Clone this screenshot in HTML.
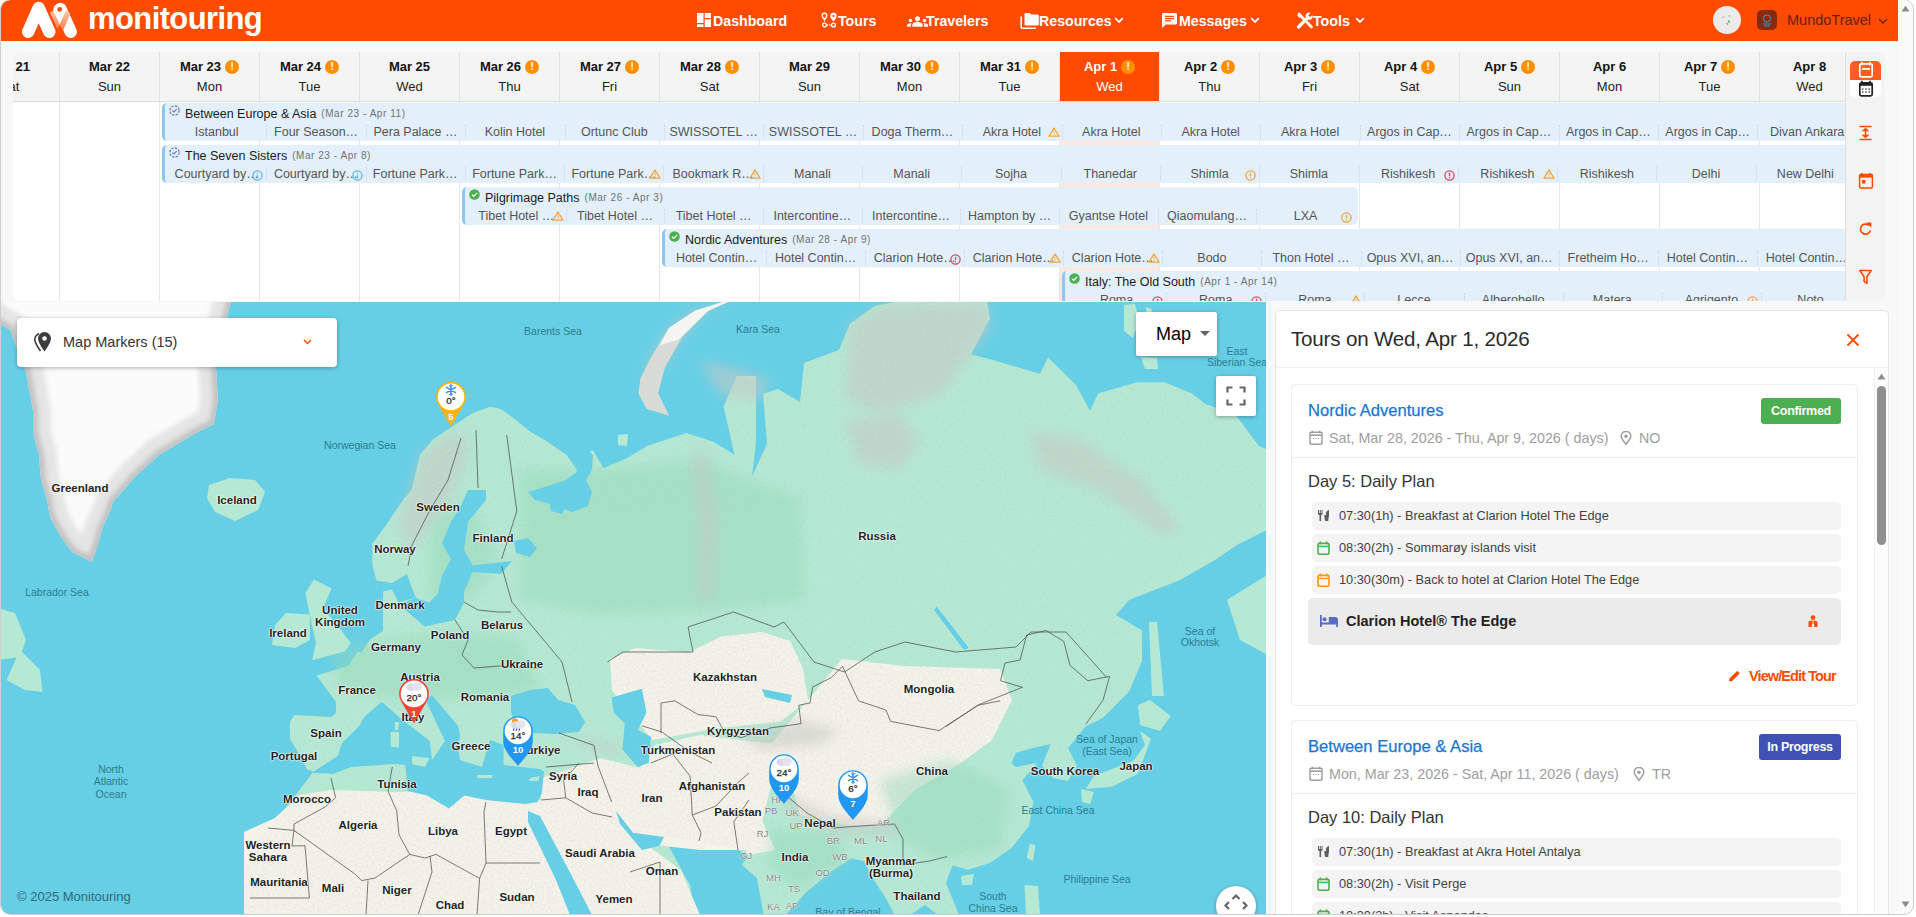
<!DOCTYPE html><html><head><meta charset="utf-8"><style>
*{box-sizing:border-box;margin:0;padding:0}
html,body{width:1916px;height:917px;overflow:hidden;background:#fff;font-family:"Liberation Sans",sans-serif}
.abs{position:absolute}
#frame{position:absolute;left:0;top:0;width:1914px;height:915px;background:#f8f8f8;border-radius:10px;overflow:hidden}
#bd{position:absolute;left:0;top:-1px;width:1914px;height:916px;border:1px solid #cfcfcf;border-radius:10px;pointer-events:none}
#hdr{position:absolute;left:1px;top:0;width:1897px;height:41px;background:#ff4b00;border-radius:9px 0 0 0}
.nav{position:absolute;top:1px;height:41px;line-height:41px;color:#fff;font-weight:bold;font-size:14.2px;white-space:nowrap}
.nav svg{position:absolute}
#cal{position:absolute;left:13px;top:52px;width:1832px;height:249px;overflow:hidden;border-radius:6px 6px 0 6px}
#calhead{position:absolute;left:0;top:0;width:1832px;height:50px;background:#f4f4f4;border-bottom:1px solid #dcdcdc}
.dh{position:absolute;top:0;width:100px;height:49px;border-right:1px solid #e2e2e2;text-align:center}
.dh .d{position:absolute;left:0;width:100%;top:7px;font-weight:bold;font-size:13px;color:#111;white-space:nowrap}
.dh .n{position:absolute;left:0;width:100%;top:27px;font-size:13px;color:#222}
.warn{display:inline-block;width:14px;height:14px;border-radius:50%;background:#ff8f00;color:#fff;font-size:10px;line-height:14px;text-align:center;font-weight:bold;vertical-align:top;margin-left:4px;margin-top:0px}
#calbody{position:absolute;left:0;top:50px;width:1832px;height:199px;background:#fff}
.col{position:absolute;top:0;height:199px;border-right:1px solid #e8e8e8}
.bar{position:absolute;height:38px;background:#e3f0fc;border-left:3px solid #8ec5f7;border-radius:5px;overflow:hidden}
.bt{position:absolute;left:20px;top:4px;font-size:12.5px;color:#1b1b1b;white-space:nowrap}
.bt small{font-size:10px;color:#707070;letter-spacing:0.55px;margin-left:5px;vertical-align:1px}
.bi{position:absolute;left:4px;top:2px;line-height:0}
.seg{position:absolute;top:22px;height:15px;font-size:12.5px;color:#545454;text-align:center;white-space:nowrap;overflow:hidden}
.sep{position:absolute;top:22px;height:14px;border-left:1px dotted #c9d6e3}
.lbl{position:absolute;width:120px;text-align:center;font-size:11.5px;font-weight:bold;color:#222;white-space:nowrap;text-shadow:0 0 2px #fff,0 0 2px #fff,0 0 1px #fff}
.stl{position:absolute;width:60px;text-align:center;font-size:9.5px;color:#808080;white-space:nowrap;text-shadow:0 0 2px #fff,0 0 1px #fff}
.slbl{position:absolute;width:120px;text-align:center;font-size:10.5px;color:#2a7d8f;white-space:nowrap}
#tb{position:absolute;left:1845px;top:52px;width:40px;height:249px;background:#f3f3f3;border-radius:0 6px 5px 0}
</style></head><body><div id="frame">
<div id="hdr">
<svg class="abs" style="left:15px;top:0px" width="70" height="40" viewBox="15 0 70 40">
<defs><linearGradient id="lg1" x1="0" y1="0" x2="0" y2="1"><stop offset="0" stop-color="#ffc2a6"/><stop offset="1" stop-color="#ff7f4a"/></linearGradient></defs>
<path d="M27.2 31.8L37.7 8L48.3 31.8" fill="none" stroke="#fff" stroke-width="12.4" stroke-linecap="round" stroke-linejoin="round"/>
<path d="M59.5 9L69.7 31.8" fill="none" stroke="#fff" stroke-width="12.4" stroke-linecap="round"/>
<path d="M48.8 12.2L53 10.6L58.8 24.6L56.6 29.2Z" fill="url(#lg1)"/>
<path d="M64.3 10.6L69.4 13.6L62.1 30.4L58.4 24.6Z" fill="url(#lg1)"/>
<path d="M58.6 24.3L52.9 12.2A6.25 6.25 0 1 1 64.3 12.2Z" fill="#fff"/>
<circle cx="58.7" cy="9.4" r="2.4" fill="#ff4b00"/>
</svg>
<div class="abs" style="left:87px;top:1px;font-size:31px;font-weight:bold;color:#fff;letter-spacing:-0.6px">monitouring</div>
<svg class="abs" style="left:695px;top:12px" width="16" height="16" viewBox="0 0 16 16"><path d="M1 1h6.5v10H1zM1 12.2h6.5V15H1zM8.7 1H15v5H8.7zM8.7 7.2H15V15H8.7z" fill="#fff"/></svg>
<div class="nav" style="left:712px">Dashboard</div>
<svg class="abs" style="left:820px;top:12px" width="17" height="16" viewBox="0 0 17 16"><path d="M3.5 1.2a2.3 2.3 0 0 1 2.3 2.3c0 1.6-2.3 4-2.3 4S1.2 5.1 1.2 3.5A2.3 2.3 0 0 1 3.5 1.2Z" fill="none" stroke="#fff" stroke-width="1.4"/><path d="M12.5 0.8a3.2 3.2 0 0 1 3.2 3.2c0 2.2-3.2 5.6-3.2 5.6S9.3 6.2 9.3 4a3.2 3.2 0 0 1 3.2-3.2Z" fill="#fff"/><circle cx="12.5" cy="4" r="1.1" fill="#ff4b00"/><circle cx="3.5" cy="13" r="1.9" fill="none" stroke="#fff" stroke-width="1.4"/><circle cx="12.5" cy="13" r="1.9" fill="none" stroke="#fff" stroke-width="1.4"/><path d="M3.5 8.5v2.3M5.8 13h4.5" stroke="#fff" stroke-width="1.3" stroke-dasharray="1.3 1"/></svg>
<div class="nav" style="left:837px">Tours</div>
<svg class="abs" style="left:906px;top:13px" width="21" height="15" viewBox="0 0 24 16"><path d="M12 9.75c1.63 0 3.07.39 4.24.9 1.08.48 1.76 1.56 1.76 2.73V15H6v-1.61c0-1.18.68-2.26 1.76-2.73 1.17-.52 2.61-.91 4.24-.91zM4 10c1.1 0 2-.9 2-2s-.9-2-2-2-2 .9-2 2 .9 2 2 2zm1.13 1.1c-.37-.06-.74-.1-1.13-.1-.99 0-1.930.21-2.78.58C.48 11.9 0 12.62 0 13.43V15h4.5v-1.61c0-.83.23-1.61.63-2.29zM20 10c1.1 0 2-.9 2-2s-.9-2-2-2-2 .9-2 2 .9 2 2 2zm4 3.43c0-.81-.48-1.53-1.22-1.85-.85-.37-1.79-.58-2.78-.58-.39 0-.76.04-1.13.1.4.68.63 1.46.63 2.29V15H24v-1.57zM12 3c1.66 0 3 1.34 3 3s-1.34 3-3 3-3-1.34-3-3 1.34-3 3-3z" fill="#fff"/></svg>
<div class="nav" style="left:925px">Travelers</div>
<svg class="abs" style="left:1019px;top:12px" width="20" height="17" viewBox="0 0 20 17"><path d="M1.2 4.5v10.5c0 .6.5 1.2 1.2 1.2h13.5" fill="none" stroke="#fff" stroke-width="1.6"/><path d="M4.5 2.2c0-.7.5-1.2 1.2-1.2h4l1.6 1.5h6.3c.7 0 1.2.5 1.2 1.2v8.6c0 .7-.5 1.2-1.2 1.2H5.7c-.7 0-1.2-.5-1.2-1.2Z" fill="#fff"/></svg>
<div class="nav" style="left:1038px">Resources</div>
<svg class="abs" style="left:1160px;top:12px" width="17" height="17" viewBox="0 0 17 17"><path d="M2.2 1h12.6c.7 0 1.2.5 1.2 1.2v9c0 .7-.5 1.2-1.2 1.2H4.8L1 16V2.2C1 1.5 1.5 1 2.2 1Z" fill="#fff"/><path d="M4 4.3h9M4 6.6h9M4 8.9h6" stroke="#ff4b00" stroke-width="1.2"/></svg>
<div class="nav" style="left:1178px">Messages</div>
<svg class="abs" style="left:1295px;top:12px" width="18" height="17" viewBox="0 0 18 17"><path d="M2.5 15L11.5 6" stroke="#fff" stroke-width="3.2" stroke-linecap="round"/><path d="M9.5 4.5a3.5 3.5 0 0 1 5-3.5l-2.2 2.2 1.9 1.9 2.2-2.2a3.5 3.5 0 0 1-3.5 5Z" fill="#fff"/><path d="M3 2L15.5 15" stroke="#fff" stroke-width="2.6" stroke-linecap="round"/><path d="M1.2 3.5L3.5 1.2L6 3.5L3.5 6Z" fill="#fff"/></svg>
<div class="nav" style="left:1312px">Tools</div>
<svg class="abs" style="left:1113px;top:17px" width="10" height="7" viewBox="0 0 10 7"><path d="M1.2 1.2L5 5L8.8 1.2" fill="none" stroke="#fff" stroke-width="1.8"/></svg>
<svg class="abs" style="left:1249px;top:17px" width="10" height="7" viewBox="0 0 10 7"><path d="M1.2 1.2L5 5L8.8 1.2" fill="none" stroke="#fff" stroke-width="1.8"/></svg>
<svg class="abs" style="left:1354px;top:17px" width="10" height="7" viewBox="0 0 10 7"><path d="M1.2 1.2L5 5L8.8 1.2" fill="none" stroke="#fff" stroke-width="1.8"/></svg>
<div class="abs" style="left:1712px;top:6px;width:28px;height:28px;border-radius:50%;background:#ebebeb"></div>
<svg class="abs" style="left:1718px;top:12px" width="16" height="16" viewBox="0 0 16 16"><path d="M3 5h3M9 4h3" stroke="#bbb" stroke-width="1"/><path d="M9 8L10 12L11 9Z" fill="#3aa55a"/><path d="M8 10L9 13L7.5 12Z" fill="#e04040"/></svg>
<div class="abs" style="left:1756px;top:10px;width:20px;height:20px;border-radius:5px;background:#862a0c"></div>
<svg class="abs" style="left:1758px;top:12px" width="16" height="16" viewBox="0 0 16 16"><circle cx="8" cy="6.5" r="3.6" fill="none" stroke="#3a9ad8" stroke-width="1"/><path d="M4 12h8M5 14h6" stroke="#3a9ad8" stroke-width="0.9"/></svg>
<div class="abs" style="left:1786px;top:0;height:41px;line-height:40px;font-size:14.5px;color:#66220a;white-space:nowrap">MundoTravel</div>
<svg class="abs" style="left:1877px;top:18px" width="10" height="6" viewBox="0 0 10 6"><path d="M1 1L5 5L9 1" fill="none" stroke="#66220a" stroke-width="1.4"/></svg>
</div>
<div id="cal">
<div id="calhead">
<div class="dh" style="left:-53px;"><div class="d" style="">Mar 21</div><div class="n" style="">Sat</div></div>
<div class="dh" style="left:47px;"><div class="d" style="">Mar 22</div><div class="n" style="">Sun</div></div>
<div class="dh" style="left:147px;"><div class="d" style="">Mar 23<span class="warn" style="margin-top:1px">!</span></div><div class="n" style="">Mon</div></div>
<div class="dh" style="left:247px;"><div class="d" style="">Mar 24<span class="warn" style="margin-top:1px">!</span></div><div class="n" style="">Tue</div></div>
<div class="dh" style="left:347px;"><div class="d" style="">Mar 25</div><div class="n" style="">Wed</div></div>
<div class="dh" style="left:447px;"><div class="d" style="">Mar 26<span class="warn" style="margin-top:1px">!</span></div><div class="n" style="">Thu</div></div>
<div class="dh" style="left:547px;"><div class="d" style="">Mar 27<span class="warn" style="margin-top:1px">!</span></div><div class="n" style="">Fri</div></div>
<div class="dh" style="left:647px;"><div class="d" style="">Mar 28<span class="warn" style="margin-top:1px">!</span></div><div class="n" style="">Sat</div></div>
<div class="dh" style="left:747px;"><div class="d" style="">Mar 29</div><div class="n" style="">Sun</div></div>
<div class="dh" style="left:847px;"><div class="d" style="">Mar 30<span class="warn" style="margin-top:1px">!</span></div><div class="n" style="">Mon</div></div>
<div class="dh" style="left:947px;"><div class="d" style="">Mar 31<span class="warn" style="margin-top:1px">!</span></div><div class="n" style="">Tue</div></div>
<div class="dh" style="left:1047px;background:#ff4b00;"><div class="d" style="color:#fff;">Apr 1<span class="warn" style="margin-top:1px">!</span></div><div class="n" style="color:#fff;">Wed</div></div>
<div class="dh" style="left:1147px;"><div class="d" style="">Apr 2<span class="warn" style="margin-top:1px">!</span></div><div class="n" style="">Thu</div></div>
<div class="dh" style="left:1247px;"><div class="d" style="">Apr 3<span class="warn" style="margin-top:1px">!</span></div><div class="n" style="">Fri</div></div>
<div class="dh" style="left:1347px;"><div class="d" style="">Apr 4<span class="warn" style="margin-top:1px">!</span></div><div class="n" style="">Sat</div></div>
<div class="dh" style="left:1447px;"><div class="d" style="">Apr 5<span class="warn" style="margin-top:1px">!</span></div><div class="n" style="">Sun</div></div>
<div class="dh" style="left:1547px;"><div class="d" style="">Apr 6</div><div class="n" style="">Mon</div></div>
<div class="dh" style="left:1647px;"><div class="d" style="">Apr 7<span class="warn" style="margin-top:1px">!</span></div><div class="n" style="">Tue</div></div>
<div class="dh" style="left:1747px;"><div class="d" style="">Apr 8</div><div class="n" style="">Wed</div></div>
</div>
<div id="calbody">
<div class="col" style="left:-53px;width:100px;"></div>
<div class="col" style="left:47px;width:100px;"></div>
<div class="col" style="left:147px;width:100px;"></div>
<div class="col" style="left:247px;width:100px;"></div>
<div class="col" style="left:347px;width:100px;"></div>
<div class="col" style="left:447px;width:100px;"></div>
<div class="col" style="left:547px;width:100px;"></div>
<div class="col" style="left:647px;width:100px;"></div>
<div class="col" style="left:747px;width:100px;"></div>
<div class="col" style="left:847px;width:100px;"></div>
<div class="col" style="left:947px;width:100px;"></div>
<div class="col" style="left:1047px;width:100px;background:#fde9e0;"></div>
<div class="col" style="left:1147px;width:100px;"></div>
<div class="col" style="left:1247px;width:100px;"></div>
<div class="col" style="left:1347px;width:100px;"></div>
<div class="col" style="left:1447px;width:100px;"></div>
<div class="col" style="left:1547px;width:100px;"></div>
<div class="col" style="left:1647px;width:100px;"></div>
<div class="col" style="left:1747px;width:100px;"></div>
<div class="bar" style="left:149px;top:1px;width:1996px">
<div class="bi"><svg width="11" height="11" viewBox="0 0 11 11"><circle cx="5.5" cy="5.5" r="4.6" fill="none" stroke="#5c6bc0" stroke-width="1.2" stroke-dasharray="2.2 1.4"/><path d="M3.4 5.6 L5 7 L7.6 4.2" fill="none" stroke="#5c6bc0" stroke-width="1.1"/></svg></div>
<div class="bt">Between Europe &amp; Asia<small>(Mar 23 - Apr 11)</small></div>
<div class="seg" style="left:2.00px;width:99.40px">Istanbul</div>
<div class="sep" style="left:101.40px"></div>
<div class="seg" style="left:101.40px;width:99.40px">Four Season…</div>
<div class="sep" style="left:200.80px"></div>
<div class="seg" style="left:200.80px;width:99.40px">Pera Palace …</div>
<div class="sep" style="left:300.20px"></div>
<div class="seg" style="left:300.20px;width:99.40px">Kolin Hotel</div>
<div class="sep" style="left:399.60px"></div>
<div class="seg" style="left:399.60px;width:99.40px">Ortunc Club</div>
<div class="sep" style="left:499.00px"></div>
<div class="seg" style="left:499.00px;width:99.40px">SWISSOTEL …</div>
<div class="sep" style="left:598.40px"></div>
<div class="seg" style="left:598.40px;width:99.40px">SWISSOTEL …</div>
<div class="sep" style="left:697.80px"></div>
<div class="seg" style="left:697.80px;width:99.40px">Doga Therm…</div>
<div class="sep" style="left:797.20px"></div>
<div class="seg" style="left:797.20px;width:99.40px">Akra Hotel</div>
<div class="abs" style="left:882.60px;top:24px;line-height:0"><svg width="12" height="10" viewBox="0 0 12 10"><path d="M6 1 L11 9.2 L1 9.2 Z" fill="none" stroke="#f6a33c" stroke-width="1.3" stroke-linejoin="round"/><path d="M6 4v2.5" stroke="#f6a33c" stroke-width="1"/><circle cx="6" cy="7.8" r="0.5" fill="#f6a33c"/></svg></div>
<div class="sep" style="left:896.60px"></div>
<div class="seg" style="left:896.60px;width:99.40px">Akra Hotel</div>
<div class="sep" style="left:996.00px"></div>
<div class="seg" style="left:996.00px;width:99.40px">Akra Hotel</div>
<div class="sep" style="left:1095.40px"></div>
<div class="seg" style="left:1095.40px;width:99.40px">Akra Hotel</div>
<div class="sep" style="left:1194.80px"></div>
<div class="seg" style="left:1194.80px;width:99.40px">Argos in Cap…</div>
<div class="sep" style="left:1294.20px"></div>
<div class="seg" style="left:1294.20px;width:99.40px">Argos in Cap…</div>
<div class="sep" style="left:1393.60px"></div>
<div class="seg" style="left:1393.60px;width:99.40px">Argos in Cap…</div>
<div class="sep" style="left:1493.00px"></div>
<div class="seg" style="left:1493.00px;width:99.40px">Argos in Cap…</div>
<div class="sep" style="left:1592.40px"></div>
<div class="seg" style="left:1592.40px;width:99.40px">Divan Ankara</div>
<div class="sep" style="left:1691.80px"></div>
<div class="seg" style="left:1691.80px;width:99.40px">Divan Ankara</div>
</div>
<div class="bar" style="left:149px;top:43px;width:1696px">
<div class="bi"><svg width="11" height="11" viewBox="0 0 11 11"><circle cx="5.5" cy="5.5" r="4.6" fill="none" stroke="#5c6bc0" stroke-width="1.2" stroke-dasharray="2.2 1.4"/><path d="M3.4 5.6 L5 7 L7.6 4.2" fill="none" stroke="#5c6bc0" stroke-width="1.1"/></svg></div>
<div class="bt">The Seven Sisters<small>(Mar 23 - Apr 8)</small></div>
<div class="seg" style="left:2.00px;width:99.29px">Courtyard by…</div>
<div class="abs" style="left:87.29px;top:25px;line-height:0"><svg width="11" height="11" viewBox="0 0 11 11"><circle cx="5.5" cy="5.5" r="4.6" fill="none" stroke="#64b5f6" stroke-width="1.3"/><path d="M5.5 4.8v3.4" stroke="#64b5f6" stroke-width="1.3"/><circle cx="5.5" cy="3.2" r="0.7" fill="#64b5f6"/></svg></div>
<div class="sep" style="left:101.29px"></div>
<div class="seg" style="left:101.29px;width:99.29px">Courtyard by…</div>
<div class="abs" style="left:186.59px;top:25px;line-height:0"><svg width="11" height="11" viewBox="0 0 11 11"><circle cx="5.5" cy="5.5" r="4.6" fill="none" stroke="#64b5f6" stroke-width="1.3"/><path d="M5.5 4.8v3.4" stroke="#64b5f6" stroke-width="1.3"/><circle cx="5.5" cy="3.2" r="0.7" fill="#64b5f6"/></svg></div>
<div class="sep" style="left:200.59px"></div>
<div class="seg" style="left:200.59px;width:99.29px">Fortune Park…</div>
<div class="sep" style="left:299.88px"></div>
<div class="seg" style="left:299.88px;width:99.29px">Fortune Park…</div>
<div class="sep" style="left:399.18px"></div>
<div class="seg" style="left:399.18px;width:99.29px">Fortune Park…</div>
<div class="abs" style="left:484.47px;top:24px;line-height:0"><svg width="12" height="10" viewBox="0 0 12 10"><path d="M6 1 L11 9.2 L1 9.2 Z" fill="none" stroke="#f6a33c" stroke-width="1.3" stroke-linejoin="round"/><path d="M6 4v2.5" stroke="#f6a33c" stroke-width="1"/><circle cx="6" cy="7.8" r="0.5" fill="#f6a33c"/></svg></div>
<div class="sep" style="left:498.47px"></div>
<div class="seg" style="left:498.47px;width:99.29px">Bookmark R…</div>
<div class="abs" style="left:583.76px;top:24px;line-height:0"><svg width="12" height="10" viewBox="0 0 12 10"><path d="M6 1 L11 9.2 L1 9.2 Z" fill="none" stroke="#f6a33c" stroke-width="1.3" stroke-linejoin="round"/><path d="M6 4v2.5" stroke="#f6a33c" stroke-width="1"/><circle cx="6" cy="7.8" r="0.5" fill="#f6a33c"/></svg></div>
<div class="sep" style="left:597.76px"></div>
<div class="seg" style="left:597.76px;width:99.29px">Manali</div>
<div class="sep" style="left:697.06px"></div>
<div class="seg" style="left:697.06px;width:99.29px">Manali</div>
<div class="sep" style="left:796.35px"></div>
<div class="seg" style="left:796.35px;width:99.29px">Sojha</div>
<div class="sep" style="left:895.65px"></div>
<div class="seg" style="left:895.65px;width:99.29px">Thanedar</div>
<div class="sep" style="left:994.94px"></div>
<div class="seg" style="left:994.94px;width:99.29px">Shimla</div>
<div class="abs" style="left:1080.24px;top:25px;line-height:0"><svg width="11" height="11" viewBox="0 0 11 11"><circle cx="5.5" cy="5.5" r="4.6" fill="none" stroke="#f4a044" stroke-width="1.3"/><path d="M5.5 2.8v3.4" stroke="#f4a044" stroke-width="1.3"/><circle cx="5.5" cy="7.8" r="0.7" fill="#f4a044"/></svg></div>
<div class="sep" style="left:1094.24px"></div>
<div class="seg" style="left:1094.24px;width:99.29px">Shimla</div>
<div class="sep" style="left:1193.53px"></div>
<div class="seg" style="left:1193.53px;width:99.29px">Rishikesh</div>
<div class="abs" style="left:1278.82px;top:25px;line-height:0"><svg width="11" height="11" viewBox="0 0 11 11"><circle cx="5.5" cy="5.5" r="4.6" fill="none" stroke="#d9455f" stroke-width="1.3"/><path d="M5.5 2.8v3.4" stroke="#d9455f" stroke-width="1.3"/><circle cx="5.5" cy="7.8" r="0.7" fill="#d9455f"/></svg></div>
<div class="sep" style="left:1292.82px"></div>
<div class="seg" style="left:1292.82px;width:99.29px">Rishikesh</div>
<div class="abs" style="left:1378.12px;top:24px;line-height:0"><svg width="12" height="10" viewBox="0 0 12 10"><path d="M6 1 L11 9.2 L1 9.2 Z" fill="none" stroke="#f6a33c" stroke-width="1.3" stroke-linejoin="round"/><path d="M6 4v2.5" stroke="#f6a33c" stroke-width="1"/><circle cx="6" cy="7.8" r="0.5" fill="#f6a33c"/></svg></div>
<div class="sep" style="left:1392.12px"></div>
<div class="seg" style="left:1392.12px;width:99.29px">Rishikesh</div>
<div class="sep" style="left:1491.41px"></div>
<div class="seg" style="left:1491.41px;width:99.29px">Delhi</div>
<div class="sep" style="left:1590.71px"></div>
<div class="seg" style="left:1590.71px;width:99.29px">New Delhi</div>
</div>
<div class="bar" style="left:449px;top:85px;width:896px">
<div class="bi"><svg width="11" height="11" viewBox="0 0 11 11"><circle cx="5.5" cy="5.5" r="5.3" fill="#4caf50"/><path d="M2.9 5.6 L4.7 7.3 L8.2 3.8" fill="none" stroke="#fff" stroke-width="1.2"/></svg></div>
<div class="bt">Pilgrimage Paths<small>(Mar 26 - Apr 3)</small></div>
<div class="seg" style="left:2.00px;width:98.67px">Tibet Hotel …</div>
<div class="abs" style="left:86.67px;top:24px;line-height:0"><svg width="12" height="10" viewBox="0 0 12 10"><path d="M6 1 L11 9.2 L1 9.2 Z" fill="none" stroke="#f6a33c" stroke-width="1.3" stroke-linejoin="round"/><path d="M6 4v2.5" stroke="#f6a33c" stroke-width="1"/><circle cx="6" cy="7.8" r="0.5" fill="#f6a33c"/></svg></div>
<div class="sep" style="left:100.67px"></div>
<div class="seg" style="left:100.67px;width:98.67px">Tibet Hotel …</div>
<div class="sep" style="left:199.33px"></div>
<div class="seg" style="left:199.33px;width:98.67px">Tibet Hotel …</div>
<div class="sep" style="left:298.00px"></div>
<div class="seg" style="left:298.00px;width:98.67px">Intercontine…</div>
<div class="sep" style="left:396.67px"></div>
<div class="seg" style="left:396.67px;width:98.67px">Intercontine…</div>
<div class="sep" style="left:495.33px"></div>
<div class="seg" style="left:495.33px;width:98.67px">Hampton by …</div>
<div class="sep" style="left:594.00px"></div>
<div class="seg" style="left:594.00px;width:98.67px">Gyantse Hotel</div>
<div class="sep" style="left:692.67px"></div>
<div class="seg" style="left:692.67px;width:98.67px">Qiaomulang…</div>
<div class="sep" style="left:791.33px"></div>
<div class="seg" style="left:791.33px;width:98.67px">LXA</div>
<div class="abs" style="left:876.00px;top:25px;line-height:0"><svg width="11" height="11" viewBox="0 0 11 11"><circle cx="5.5" cy="5.5" r="4.6" fill="none" stroke="#f4a044" stroke-width="1.3"/><path d="M5.5 2.8v3.4" stroke="#f4a044" stroke-width="1.3"/><circle cx="5.5" cy="7.8" r="0.7" fill="#f4a044"/></svg></div>
</div>
<div class="bar" style="left:649px;top:127px;width:1296px">
<div class="bi"><svg width="11" height="11" viewBox="0 0 11 11"><circle cx="5.5" cy="5.5" r="5.3" fill="#4caf50"/><path d="M2.9 5.6 L4.7 7.3 L8.2 3.8" fill="none" stroke="#fff" stroke-width="1.2"/></svg></div>
<div class="bt">Nordic Adventures<small>(Mar 28 - Apr 9)</small></div>
<div class="seg" style="left:2.00px;width:99.08px">Hotel Contin…</div>
<div class="sep" style="left:101.08px"></div>
<div class="seg" style="left:101.08px;width:99.08px">Hotel Contin…</div>
<div class="sep" style="left:200.15px"></div>
<div class="seg" style="left:200.15px;width:99.08px">Clarion Hote…</div>
<div class="abs" style="left:285.23px;top:25px;line-height:0"><svg width="11" height="11" viewBox="0 0 11 11"><circle cx="5.5" cy="5.5" r="4.6" fill="none" stroke="#d9455f" stroke-width="1.3"/><path d="M5.5 2.8v3.4" stroke="#d9455f" stroke-width="1.3"/><circle cx="5.5" cy="7.8" r="0.7" fill="#d9455f"/></svg></div>
<div class="sep" style="left:299.23px"></div>
<div class="seg" style="left:299.23px;width:99.08px">Clarion Hote…</div>
<div class="abs" style="left:384.31px;top:24px;line-height:0"><svg width="12" height="10" viewBox="0 0 12 10"><path d="M6 1 L11 9.2 L1 9.2 Z" fill="none" stroke="#f6a33c" stroke-width="1.3" stroke-linejoin="round"/><path d="M6 4v2.5" stroke="#f6a33c" stroke-width="1"/><circle cx="6" cy="7.8" r="0.5" fill="#f6a33c"/></svg></div>
<div class="sep" style="left:398.31px"></div>
<div class="seg" style="left:398.31px;width:99.08px">Clarion Hote…</div>
<div class="abs" style="left:483.38px;top:24px;line-height:0"><svg width="12" height="10" viewBox="0 0 12 10"><path d="M6 1 L11 9.2 L1 9.2 Z" fill="none" stroke="#f6a33c" stroke-width="1.3" stroke-linejoin="round"/><path d="M6 4v2.5" stroke="#f6a33c" stroke-width="1"/><circle cx="6" cy="7.8" r="0.5" fill="#f6a33c"/></svg></div>
<div class="sep" style="left:497.38px"></div>
<div class="seg" style="left:497.38px;width:99.08px">Bodo</div>
<div class="sep" style="left:596.46px"></div>
<div class="seg" style="left:596.46px;width:99.08px">Thon Hotel …</div>
<div class="sep" style="left:695.54px"></div>
<div class="seg" style="left:695.54px;width:99.08px">Opus XVI, an…</div>
<div class="sep" style="left:794.62px"></div>
<div class="seg" style="left:794.62px;width:99.08px">Opus XVI, an…</div>
<div class="sep" style="left:893.69px"></div>
<div class="seg" style="left:893.69px;width:99.08px">Fretheim Ho…</div>
<div class="sep" style="left:992.77px"></div>
<div class="seg" style="left:992.77px;width:99.08px">Hotel Contin…</div>
<div class="sep" style="left:1091.85px"></div>
<div class="seg" style="left:1091.85px;width:99.08px">Hotel Contin…</div>
<div class="sep" style="left:1190.92px"></div>
<div class="seg" style="left:1190.92px;width:99.08px">Hotel Contin…</div>
</div>
<div class="bar" style="left:1049px;top:169px;width:1396px">
<div class="bi"><svg width="11" height="11" viewBox="0 0 11 11"><circle cx="5.5" cy="5.5" r="5.3" fill="#4caf50"/><path d="M2.9 5.6 L4.7 7.3 L8.2 3.8" fill="none" stroke="#fff" stroke-width="1.2"/></svg></div>
<div class="bt">Italy: The Old South<small>(Apr 1 - Apr 14)</small></div>
<div class="seg" style="left:2.00px;width:99.14px">Roma</div>
<div class="abs" style="left:87.14px;top:25px;line-height:0"><svg width="11" height="11" viewBox="0 0 11 11"><circle cx="5.5" cy="5.5" r="4.6" fill="none" stroke="#d9455f" stroke-width="1.3"/><path d="M5.5 2.8v3.4" stroke="#d9455f" stroke-width="1.3"/><circle cx="5.5" cy="7.8" r="0.7" fill="#d9455f"/></svg></div>
<div class="sep" style="left:101.14px"></div>
<div class="seg" style="left:101.14px;width:99.14px">Roma</div>
<div class="abs" style="left:186.29px;top:25px;line-height:0"><svg width="11" height="11" viewBox="0 0 11 11"><circle cx="5.5" cy="5.5" r="4.6" fill="none" stroke="#d9455f" stroke-width="1.3"/><path d="M5.5 2.8v3.4" stroke="#d9455f" stroke-width="1.3"/><circle cx="5.5" cy="7.8" r="0.7" fill="#d9455f"/></svg></div>
<div class="sep" style="left:200.29px"></div>
<div class="seg" style="left:200.29px;width:99.14px">Roma</div>
<div class="abs" style="left:285.43px;top:24px;line-height:0"><svg width="12" height="10" viewBox="0 0 12 10"><path d="M6 1 L11 9.2 L1 9.2 Z" fill="none" stroke="#f6a33c" stroke-width="1.3" stroke-linejoin="round"/><path d="M6 4v2.5" stroke="#f6a33c" stroke-width="1"/><circle cx="6" cy="7.8" r="0.5" fill="#f6a33c"/></svg></div>
<div class="sep" style="left:299.43px"></div>
<div class="seg" style="left:299.43px;width:99.14px">Lecce</div>
<div class="sep" style="left:398.57px"></div>
<div class="seg" style="left:398.57px;width:99.14px">Alberobello</div>
<div class="sep" style="left:497.71px"></div>
<div class="seg" style="left:497.71px;width:99.14px">Matera</div>
<div class="sep" style="left:596.86px"></div>
<div class="seg" style="left:596.86px;width:99.14px">Agrigento</div>
<div class="abs" style="left:682.00px;top:25px;line-height:0"><svg width="11" height="11" viewBox="0 0 11 11"><circle cx="5.5" cy="5.5" r="4.6" fill="none" stroke="#f4a044" stroke-width="1.3"/><path d="M5.5 2.8v3.4" stroke="#f4a044" stroke-width="1.3"/><circle cx="5.5" cy="7.8" r="0.7" fill="#f4a044"/></svg></div>
<div class="sep" style="left:696.00px"></div>
<div class="seg" style="left:696.00px;width:99.14px">Noto</div>
<div class="sep" style="left:795.14px"></div>
<div class="seg" style="left:795.14px;width:99.14px">Noto</div>
</div>
</div>
</div>
<div class="abs" style="left:1px;top:302px;width:1265px;height:612px;overflow:hidden;border-radius:0 0 0 9px"><div class="abs" style="left:-1px;top:-302px;width:1266px;height:914px">
<svg class="abs" style="left:0;top:302px" width="1266" height="612" viewBox="0 302 1266 612">
<rect x="0" y="302" width="1266" height="612" fill="#67cfe5"/>
<path d="M244.0 914.0 L244.0 898.0 L246.0 870.0 L259.0 839.0 L274.5 822.0 L292.0 800.0 L311.6 774.0 L313.8 771.5 L307.0 769.4 L303.0 760.6 L289.8 738.8 L290.0 721.4 L294.5 715.0 L331.6 717.0 L336.0 712.7 L336.0 701.8 L316.4 675.6 L335.0 670.0 L348.4 665.8 L357.8 651.6 L361.4 652.7 L370.0 639.6 L383.0 631.0 L383.0 617.0 L383.0 591.6 L392.0 589.4 L398.5 602.5 L407.0 600.0 L416.0 598.0 L411.6 587.0 L407.0 574.0 L392.0 583.0 L376.7 580.7 L372.4 565.4 L372.4 543.6 L385.4 526.0 L403.0 500.0 L411.6 490.0 L420.0 454.7 L433.0 439.4 L451.0 427.4 L472.7 413.0 L490.0 406.7 L501.0 409.0 L516.0 420.0 L529.0 430.7 L547.0 441.6 L566.5 454.7 L577.0 470.0 L572.0 482.0 L585.0 478.0 L590.0 452.0 L592.7 450.0 L603.6 468.0 L625.4 459.0 L647.0 446.0 L686.5 433.0 L712.7 441.6 L734.5 454.7 L723.6 406.7 L736.7 376.0 L756.0 376.0 L756.0 441.6 L752.0 476.5 L767.0 443.8 L763.0 393.6 L778.0 389.0 L800.0 402.0 L804.0 363.0 L839.0 350.0 L850.0 323.8 L875.0 306.0 L900.0 301.0 L987.0 301.0 L990.0 318.6 L970.8 354.6 L993.0 360.0 L1040.0 374.0 L1048.0 357.4 L1076.0 385.0 L1090.0 410.8 L1098.0 393.4 L1137.0 382.3 L1164.6 382.3 L1192.0 393.4 L1206.0 404.5 L1234.0 412.8 L1259.0 446.0 L1267.0 449.5 L1267.0 530.0 L1237.0 545.0 L1215.0 560.0 L1180.0 580.0 L1129.0 600.0 L1116.0 615.0 L1142.0 630.5 L1142.0 661.0 L1129.0 691.6 L1103.0 717.8 L1085.6 726.5 L1068.0 748.0 L1077.0 765.8 L1068.0 781.0 L1053.0 778.0 L1042.0 765.8 L1050.7 744.0 L1033.0 748.0 L1015.8 752.7 L1011.4 763.6 L1015.8 767.0 L1037.6 762.8 L1022.4 780.0 L1033.3 802.0 L1029.0 826.0 L1011.4 848.0 L989.6 863.0 L967.8 869.7 L952.5 865.3 L946.0 882.8 L959.0 915.0 L938.0 915.0 L925.0 905.0 L910.0 915.0 L894.5 915.0 L885.8 898.0 L872.7 878.4 L864.0 861.0 L851.0 858.8 L833.4 869.7 L807.0 891.5 L785.4 915.0 L763.6 915.0 L757.0 878.0 L742.0 865.0 L748.0 856.0 L735.0 848.0 L715.0 845.0 L699.0 841.4 L664.0 837.0 L681.4 869.8 L690.0 885.0 L695.0 915.0 L244.0 915.0Z" fill="#b6e9d4"/>
<path d="M244.0 915.0 L244.0 832.0 L275.0 818.0 L300.0 795.0 L330.0 790.0 L400.0 792.0 L430.0 790.0 L450.0 800.0 L465.0 790.0 L490.0 795.0 L540.0 800.0 L560.0 810.0 L600.0 915.0Z" fill="#f5f2ea"/>
<path d="M541.0 778.0 L560.0 772.0 L600.0 765.0 L616.0 790.0 L616.0 811.0 L640.0 840.0 L681.0 870.0 L700.0 915.0 L576.0 915.0 L541.0 805.0Z" fill="#f5f2ea"/>
<path d="M560.0 772.0 L600.0 758.0 L640.0 768.0 L655.0 745.0 L700.0 735.0 L740.0 740.0 L790.0 745.0 L770.0 790.0 L755.0 850.0 L700.0 850.0 L664.0 846.0 L640.0 845.0 L606.0 812.0 L575.0 790.0Z" fill="#f5f2ea"/>
<path d="M610.0 659.0 L636.0 648.0 L689.0 652.5 L721.0 636.5 L762.0 632.0 L790.0 641.0 L803.0 668.6 L808.0 700.0 L780.0 722.0 L720.0 728.0 L652.0 740.0 L612.0 690.0Z" fill="#f5f2ea"/>
<path d="M808.0 700.0 L842.0 659.0 L904.0 666.0 L1000.0 669.0 L1012.0 700.0 L992.0 740.0 L958.0 765.0 L915.0 790.0 L880.0 826.0 L850.0 826.0 L800.0 815.0 L788.0 770.0 L770.0 745.0Z" fill="#f5f2ea"/>
<path d="M735.0 820.0 L760.0 815.0 L775.0 850.0 L748.0 855.0Z" fill="#f5f2ea"/>
<filter id="blr2" x="-20%" y="-20%" width="140%" height="140%"><feGaussianBlur stdDeviation="6"/></filter>
<path d="M520.0 470.0 L600.0 470.0 L700.0 460.0 L800.0 500.0 L805.0 600.0 L720.0 610.0 L600.0 615.0 L520.0 600.0Z" fill="#93d8b9" opacity="0.45" filter="url(#blr2)"/>
<path d="M330.0 650.0 L380.0 640.0 L460.0 630.0 L520.0 640.0 L540.0 690.0 L470.0 700.0 L400.0 700.0 L340.0 690.0Z" fill="#93d8b9" opacity="0.45" filter="url(#blr2)"/>
<path d="M430.0 520.0 L470.0 500.0 L500.0 560.0 L470.0 600.0 L430.0 600.0Z" fill="#93d8b9" opacity="0.45" filter="url(#blr2)"/>
<path d="M880.0 780.0 L950.0 760.0 L1010.0 790.0 L1000.0 850.0 L940.0 860.0 L900.0 840.0Z" fill="#93d8b9" opacity="0.45" filter="url(#blr2)"/>
<path d="M770.0 830.0 L830.0 830.0 L850.0 860.0 L800.0 890.0 L770.0 870.0Z" fill="#93d8b9" opacity="0.45" filter="url(#blr2)"/>
<path d="M693.0 455.0 L705.0 450.0 L718.0 520.0 L712.0 602.0 L700.0 600.0 L700.0 520.0Z" fill="#c9c9c4" opacity="0.55" filter="url(#blr2)"/>
<path d="M844.0 420.0 L900.0 415.0 L920.0 440.0 L900.0 470.0 L860.0 465.0Z" fill="#c9c9c4" opacity="0.55" filter="url(#blr2)"/>
<path d="M1031.0 430.0 L1080.0 440.0 L1140.0 480.0 L1182.0 530.0 L1160.0 535.0 L1100.0 490.0 L1040.0 470.0Z" fill="#c9c9c4" opacity="0.55" filter="url(#blr2)"/>
<path d="M640.0 378.0 L664.0 367.0 L682.0 337.0 L708.0 311.0 L730.0 301.0 L726.0 301.0 L695.0 310.7 L669.0 328.0 L651.6 356.5Z" fill="#c9c9c4" opacity="0.55" filter="url(#blr2)"/>
<path d="M850.0 325.0 L880.0 306.0 L987.0 302.0 L990.0 330.0 L970.0 355.0 L940.0 395.0 L880.0 415.0 L845.0 398.0Z" fill="#c9c9c4" opacity="0.55" filter="url(#blr2)"/>
<path d="M700.0 360.0 L740.0 370.0 L770.0 380.0 L760.0 400.0 L720.0 395.0Z" fill="#c9c9c4" opacity="0.55" filter="url(#blr2)"/>
<path d="M420.0 456.0 L440.0 440.0 L460.0 430.0 L470.0 450.0 L450.0 500.0 L420.0 540.0 L405.0 550.0 L400.0 520.0Z" fill="#c9c9c4" opacity="0.55" filter="url(#blr2)"/>
<path d="M570.0 736.0 L600.0 742.0 L625.0 748.0 L620.0 756.0 L590.0 750.0Z" fill="#c9c9c4" opacity="0.55" filter="url(#blr2)"/>
<path d="M780.0 790.0 L830.0 815.0 L900.0 825.0 L900.0 835.0 L830.0 835.0 L790.0 810.0Z" fill="#c9c9c4" opacity="0.55" filter="url(#blr2)"/>
<path d="M740.0 735.0 L800.0 720.0 L840.0 730.0 L820.0 745.0 L760.0 750.0Z" fill="#c9c9c4" opacity="0.55" filter="url(#blr2)"/>
<filter id="noise" x="0" y="0" width="100%" height="100%"><feTurbulence type="fractalNoise" baseFrequency="0.45" numOctaves="2" seed="3"/><feColorMatrix type="matrix" values="0 0 0 0 0.35  0 0 0 0 0.55  0 0 0 0 0.45  0 0 0 -1.6 0.95"/><feComposite operator="in" in2="SourceGraphic"/></filter>
<path d="M244.0 914.0 L244.0 898.0 L246.0 870.0 L259.0 839.0 L274.5 822.0 L292.0 800.0 L311.6 774.0 L313.8 771.5 L307.0 769.4 L303.0 760.6 L289.8 738.8 L290.0 721.4 L294.5 715.0 L331.6 717.0 L336.0 712.7 L336.0 701.8 L316.4 675.6 L335.0 670.0 L348.4 665.8 L357.8 651.6 L361.4 652.7 L370.0 639.6 L383.0 631.0 L383.0 617.0 L383.0 591.6 L392.0 589.4 L398.5 602.5 L407.0 600.0 L416.0 598.0 L411.6 587.0 L407.0 574.0 L392.0 583.0 L376.7 580.7 L372.4 565.4 L372.4 543.6 L385.4 526.0 L403.0 500.0 L411.6 490.0 L420.0 454.7 L433.0 439.4 L451.0 427.4 L472.7 413.0 L490.0 406.7 L501.0 409.0 L516.0 420.0 L529.0 430.7 L547.0 441.6 L566.5 454.7 L577.0 470.0 L572.0 482.0 L585.0 478.0 L590.0 452.0 L592.7 450.0 L603.6 468.0 L625.4 459.0 L647.0 446.0 L686.5 433.0 L712.7 441.6 L734.5 454.7 L723.6 406.7 L736.7 376.0 L756.0 376.0 L756.0 441.6 L752.0 476.5 L767.0 443.8 L763.0 393.6 L778.0 389.0 L800.0 402.0 L804.0 363.0 L839.0 350.0 L850.0 323.8 L875.0 306.0 L900.0 301.0 L987.0 301.0 L990.0 318.6 L970.8 354.6 L993.0 360.0 L1040.0 374.0 L1048.0 357.4 L1076.0 385.0 L1090.0 410.8 L1098.0 393.4 L1137.0 382.3 L1164.6 382.3 L1192.0 393.4 L1206.0 404.5 L1234.0 412.8 L1259.0 446.0 L1267.0 449.5 L1267.0 530.0 L1237.0 545.0 L1215.0 560.0 L1180.0 580.0 L1129.0 600.0 L1116.0 615.0 L1142.0 630.5 L1142.0 661.0 L1129.0 691.6 L1103.0 717.8 L1085.6 726.5 L1068.0 748.0 L1077.0 765.8 L1068.0 781.0 L1053.0 778.0 L1042.0 765.8 L1050.7 744.0 L1033.0 748.0 L1015.8 752.7 L1011.4 763.6 L1015.8 767.0 L1037.6 762.8 L1022.4 780.0 L1033.3 802.0 L1029.0 826.0 L1011.4 848.0 L989.6 863.0 L967.8 869.7 L952.5 865.3 L946.0 882.8 L959.0 915.0 L938.0 915.0 L925.0 905.0 L910.0 915.0 L894.5 915.0 L885.8 898.0 L872.7 878.4 L864.0 861.0 L851.0 858.8 L833.4 869.7 L807.0 891.5 L785.4 915.0 L763.6 915.0 L757.0 878.0 L742.0 865.0 L748.0 856.0 L735.0 848.0 L715.0 845.0 L699.0 841.4 L664.0 837.0 L681.4 869.8 L690.0 885.0 L695.0 915.0 L244.0 915.0Z" fill="#000" filter="url(#noise)" opacity="0.25"/>
<path d="M313.8 771.5 L337.8 756.0 L342.0 743.0 L359.6 725.7 L364.0 717.0 L381.8 701.8 L401.4 719.0 L429.8 741.0 L432.0 760.0 L445.0 741.0 L425.4 699.6 L432.0 695.2 L458.0 725.8 L460.3 734.5 L458.0 745.4 L460.0 760.0 L481.8 767.0 L490.0 740.0 L503.6 745.0 L503.6 765.0 L540.0 769.0 L544.0 771.6 L541.8 793.4 L537.5 802.0 L525.4 804.0 L486.0 800.0 L464.3 795.5 L449.0 808.6 L427.0 795.5 L407.6 791.0 L405.4 765.0 L394.5 764.0 L351.0 767.0 L333.4 773.7 L313.8 773.0Z" fill="#67cfe5"/>
<path d="M511.0 696.0 L530.0 690.0 L548.0 688.0 L558.0 700.0 L575.0 705.0 L585.0 722.0 L579.0 732.0 L555.0 734.0 L533.0 733.0 L516.0 728.0 L511.0 712.0Z" fill="#67cfe5"/>
<path d="M611.6 697.5 L642.0 688.7 L646.5 712.7 L637.8 730.0 L651.0 736.7 L648.7 763.0 L637.8 767.0 L622.5 749.8 L624.7 723.6 L613.8 712.7Z" fill="#67cfe5"/>
<path d="M398.5 604.0 L424.7 626.5 L455.0 620.0 L464.0 602.5 L464.0 591.6 L472.7 572.0 L501.0 574.0 L512.0 561.0 L472.7 565.4 L464.0 550.0 L468.0 521.8 L486.0 500.0 L486.0 490.0 L468.0 490.0 L459.6 508.7 L451.0 521.8 L442.0 543.6 L451.0 559.0 L442.0 576.0 L437.8 593.8 L429.0 602.5 L416.0 598.0Z" fill="#67cfe5"/>
<path d="M577.0 472.0 L590.0 452.0 L593.0 455.0 L592.0 470.0 L586.0 480.0 L592.0 492.0 L588.0 506.0 L572.0 512.0 L555.0 505.0 L535.0 500.0 L528.0 492.0 L548.0 486.0 L566.0 480.0Z" fill="#67cfe5"/>
<path d="M528.0 811.0 L540.0 816.0 L574.0 880.0 L592.0 915.0 L570.0 915.0 L556.0 880.0 L528.0 822.0Z" fill="#67cfe5"/>
<path d="M616.0 811.0 L633.0 832.7 L664.0 837.0 L659.6 845.8 L642.0 850.0 L620.0 824.0Z" fill="#67cfe5"/>
<path d="M314.0 579.6 L331.6 588.4 L323.0 608.0 L342.5 632.0 L351.0 643.0 L344.7 651.6 L312.0 660.3 L316.0 643.0 L312.0 625.4 L305.4 592.7Z" fill="#b6e9d4"/>
<path d="M286.0 613.0 L309.8 614.5 L310.0 640.0 L295.0 648.0 L272.0 645.0 L275.0 625.0Z" fill="#b6e9d4"/>
<path d="M209.0 485.0 L230.0 478.0 L255.0 480.0 L265.0 492.0 L258.0 510.0 L235.0 521.0 L215.0 512.0 L207.0 498.0Z" fill="#b6e9d4"/>
<path d="M-2.0 608.0 L15.0 613.0 L26.0 640.0 L20.0 657.0 L-2.0 660.0Z" fill="#b6e9d4"/>
<path d="M6.5 680.0 L20.0 650.0 L40.0 670.0 L42.5 692.0 L25.0 690.0Z" fill="#b6e9d4"/>
<path d="M1149.0 622.0 L1157.0 622.0 L1164.0 696.0 L1152.0 696.0Z" fill="#b6e9d4"/>
<path d="M1138.0 705.0 L1150.0 700.0 L1170.7 716.0 L1160.0 731.0 L1140.0 725.0Z" fill="#b6e9d4"/>
<path d="M1140.0 731.0 L1151.0 738.8 L1138.0 773.7 L1111.8 786.8 L1085.6 789.0 L1094.0 776.0 L1133.6 760.6 L1145.0 745.0Z" fill="#b6e9d4"/>
<path d="M1081.0 789.0 L1094.0 792.0 L1090.0 804.0 L1082.0 802.0Z" fill="#b6e9d4"/>
<path d="M1227.0 600.0 L1267.0 575.0 L1267.0 654.5 L1240.0 640.0Z" fill="#b6e9d4"/>
<path d="M1030.0 843.5 L1035.4 845.0 L1033.0 861.0 L1026.7 858.0Z" fill="#b6e9d4"/>
<path d="M961.0 876.0 L974.0 874.0 L972.0 885.0 L962.0 885.0Z" fill="#b6e9d4"/>
<path d="M1024.5 885.0 L1038.0 886.0 L1040.0 915.0 L1026.0 915.0Z" fill="#b6e9d4"/>
<path d="M412.0 756.0 L429.4 758.0 L425.0 767.0 L412.0 764.0Z" fill="#b6e9d4"/>
<path d="M390.5 732.0 L399.0 732.0 L399.0 747.6 L391.0 747.0Z" fill="#b6e9d4"/>
<path d="M395.0 722.0 L399.0 722.0 L398.0 730.0 L395.0 730.0Z" fill="#b6e9d4"/>
<path d="M477.4 775.0 L492.7 775.0 L492.0 778.0 L477.0 778.0Z" fill="#b6e9d4"/>
<path d="M530.0 778.0 L540.0 776.0 L538.0 781.0 L529.0 781.0Z" fill="#b6e9d4"/>
<path d="M726.0 301.0 L695.0 310.7 L669.0 328.0 L651.6 356.5 L640.7 378.0 L638.5 393.6 L647.0 409.0 L669.0 415.4 L658.0 393.6 L664.7 367.4 L682.0 337.0 L708.0 310.7 L730.0 301.0Z" fill="#b6e9d4"/>
<path d="M1124.0 305.0 L1135.0 304.0 L1139.0 320.0 L1133.0 338.0 L1124.0 331.0Z" fill="#b6e9d4"/>
<path d="M1141.0 357.0 L1157.0 358.0 L1158.0 369.0 L1145.0 369.0Z" fill="#b6e9d4"/>
<path d="M1146.0 307.0 L1152.0 309.0 L1151.0 314.0 L1146.0 312.0Z" fill="#b6e9d4"/>
<path d="M618.0 435.0 L628.0 434.0 L627.0 446.0 L618.0 445.0Z" fill="#b6e9d4"/>
<path d="M726.0 301.0 L695.0 310.7 L669.0 328.0 L651.6 356.5 L640.7 378.0 L638.5 393.6 L647.0 409.0 L669.0 415.4 L658.0 393.6 L664.7 367.4 L682.0 337.0 L708.0 310.7 L730.0 301.0Z" fill="#d9dbd6"/>
<path d="M726 301L695 310.7L669 328L660 345L678 340L708 311L730 301Z" fill="#f4f4f2"/>
<path d="M-20.0 280.0 L240.0 280.0 L231.0 301.0 L216.0 367.0 L218.0 400.0 L214.0 424.0 L196.0 433.0 L159.0 455.0 L135.0 477.0 L113.0 502.0 L111.0 509.0 L102.5 528.0 L98.0 544.0 L92.0 562.0 L72.0 552.0 L61.0 537.0 L50.0 517.0 L47.0 500.0 L41.0 480.0 L39.0 455.0 L33.0 433.0 L33.0 411.0 L26.0 372.0 L10.0 330.0 L-20.0 312.0Z" fill="#fbfbfb"/>
<path d="M936.6 606.6L968.8 648L964 650L934 610Z" fill="#67cfe5"/>
<path d="M514 541L528 538L537 548L530 557L516 553Z" fill="#67cfe5"/>
<path d="M549 500L560 498L566 506L562 514L551 511Z" fill="#67cfe5"/>
<path d="M762 689L792 695L790 703L765 697Z" fill="#67cfe5"/>
<clipPath id="gclip"><path d="M-20.0 280.0 L240.0 280.0 L231.0 301.0 L216.0 367.0 L218.0 400.0 L214.0 424.0 L196.0 433.0 L159.0 455.0 L135.0 477.0 L113.0 502.0 L111.0 509.0 L102.5 528.0 L98.0 544.0 L92.0 562.0 L72.0 552.0 L61.0 537.0 L50.0 517.0 L47.0 500.0 L41.0 480.0 L39.0 455.0 L33.0 433.0 L33.0 411.0 L26.0 372.0 L10.0 330.0 L-20.0 312.0Z"/></clipPath>
<filter id="blr" x="-10%" y="-10%" width="120%" height="120%"><feGaussianBlur stdDeviation="2.5"/></filter>
<g clip-path="url(#gclip)"><g filter="url(#blr)"><path d="M-20.0 280.0 L240.0 280.0 L231.0 301.0 L216.0 367.0 L218.0 400.0 L214.0 424.0 L196.0 433.0 L159.0 455.0 L135.0 477.0 L113.0 502.0 L111.0 509.0 L102.5 528.0 L98.0 544.0 L92.0 562.0 L72.0 552.0 L61.0 537.0 L50.0 517.0 L47.0 500.0 L41.0 480.0 L39.0 455.0 L33.0 433.0 L33.0 411.0 L26.0 372.0 L10.0 330.0 L-20.0 312.0Z" fill="none" stroke="#c9c9c9" stroke-width="36" opacity="0.45"/><path d="M-20.0 280.0 L240.0 280.0 L231.0 301.0 L216.0 367.0 L218.0 400.0 L214.0 424.0 L196.0 433.0 L159.0 455.0 L135.0 477.0 L113.0 502.0 L111.0 509.0 L102.5 528.0 L98.0 544.0 L92.0 562.0 L72.0 552.0 L61.0 537.0 L50.0 517.0 L47.0 500.0 L41.0 480.0 L39.0 455.0 L33.0 433.0 L33.0 411.0 L26.0 372.0 L10.0 330.0 L-20.0 312.0Z" fill="none" stroke="#a0a0a0" stroke-width="10" opacity="0.5"/></g></g>
<path d="M461.0 438.0 L448.0 480.0 L430.0 510.0 L412.0 545.0 L408.0 566.0" fill="none" stroke="#4a4a4a" stroke-width="0.9" opacity="0.8"/>
<path d="M476.0 430.0 L478.0 488.0" fill="none" stroke="#4a4a4a" stroke-width="0.9" opacity="0.8"/>
<path d="M506.7 435.0 L516.8 511.0 L501.7 559.0" fill="none" stroke="#4a4a4a" stroke-width="0.9" opacity="0.8"/>
<path d="M501.7 566.5 L511.8 602.0 L537.0 632.0 L562.0 662.0 L572.0 702.0" fill="none" stroke="#4a4a4a" stroke-width="0.9" opacity="0.8"/>
<path d="M464.0 602.0 L478.0 610.0 L498.0 612.0 L511.0 612.0" fill="none" stroke="#4a4a4a" stroke-width="0.9" opacity="0.8"/>
<path d="M455.0 620.0 L468.0 640.0 L462.0 655.0 L474.0 668.0 L500.0 666.0 L537.0 668.0" fill="none" stroke="#4a4a4a" stroke-width="0.9" opacity="0.8"/>
<path d="M607.5 662.0 L622.7 652.0 L693.0 652.0 L688.0 627.0 L733.6 612.0 L774.0 627.0 L784.0 622.0 L814.0 662.0 L844.5 672.0" fill="none" stroke="#4a4a4a" stroke-width="0.9" opacity="0.8"/>
<path d="M844.5 672.0 L874.8 652.0 L905.0 642.0 L955.5 652.0 L1016.0 647.0 L1031.0 632.0 L1066.0 632.0 L1106.7 677.5" fill="none" stroke="#4a4a4a" stroke-width="0.9" opacity="0.8"/>
<path d="M1026.7 635.0 L1046.0 630.5 L1063.8 641.4 L1070.0 665.4 L1087.8 680.7 L1109.6 676.4 L1103.0 700.3 L1085.6 724.3" fill="none" stroke="#4a4a4a" stroke-width="0.9" opacity="0.8"/>
<path d="M1026.7 635.0 L1020.0 660.0 L1005.0 663.0 L1000.5 680.7 L1022.4 687.3 L978.7 704.7 L946.0 726.5" fill="none" stroke="#4a4a4a" stroke-width="0.9" opacity="0.8"/>
<path d="M842.5 666.3 L858.5 700.8 L886.0 710.0 L890.7 721.4 L939.0 730.6 L978.0 705.3 L1000.0 700.8" fill="none" stroke="#4a4a4a" stroke-width="0.9" opacity="0.8"/>
<path d="M842.5 666.3 L831.0 677.8 L812.6 687.0 L810.0 703.0 L798.8 705.3 L801.0 723.7" fill="none" stroke="#4a4a4a" stroke-width="0.9" opacity="0.8"/>
<path d="M661.0 703.0 L674.8 700.8 L697.8 714.5 L716.0 716.8 L725.0 733.0 L741.4 737.5 L770.0 728.0 L801.0 723.7" fill="none" stroke="#4a4a4a" stroke-width="0.9" opacity="0.8"/>
<path d="M661.0 703.0 L661.0 733.0" fill="none" stroke="#4a4a4a" stroke-width="0.9" opacity="0.8"/>
<path d="M331.0 778.0 L335.6 797.7 L325.0 807.0 L294.0 824.0 L294.0 830.4" fill="none" stroke="#4a4a4a" stroke-width="0.9" opacity="0.8"/>
<path d="M294.0 830.4 L268.0 828.0" fill="none" stroke="#4a4a4a" stroke-width="0.9" opacity="0.8"/>
<path d="M294.0 830.4 L292.0 846.0 L305.0 845.7 L309.4 898.0 L250.0 898.0" fill="none" stroke="#4a4a4a" stroke-width="0.9" opacity="0.8"/>
<path d="M294.0 830.4 L355.0 874.0 L361.8 880.6 L375.0 878.0 L409.8 854.4" fill="none" stroke="#4a4a4a" stroke-width="0.9" opacity="0.8"/>
<path d="M392.3 767.0 L388.0 791.0 L396.7 810.8 L399.0 834.8 L409.8 854.4" fill="none" stroke="#4a4a4a" stroke-width="0.9" opacity="0.8"/>
<path d="M409.8 854.4 L425.0 858.0 L436.0 854.4 L479.6 878.4" fill="none" stroke="#4a4a4a" stroke-width="0.9" opacity="0.8"/>
<path d="M486.0 802.0 L484.0 812.0 L486.0 863.0 L479.6 878.4" fill="none" stroke="#4a4a4a" stroke-width="0.9" opacity="0.8"/>
<path d="M486.0 863.0 L540.0 863.0" fill="none" stroke="#4a4a4a" stroke-width="0.9" opacity="0.8"/>
<path d="M368.0 880.6 L366.0 915.0" fill="none" stroke="#4a4a4a" stroke-width="0.9" opacity="0.8"/>
<path d="M430.0 856.0 L432.0 872.0 L418.0 915.0" fill="none" stroke="#4a4a4a" stroke-width="0.9" opacity="0.8"/>
<path d="M479.6 878.4 L477.0 915.0" fill="none" stroke="#4a4a4a" stroke-width="0.9" opacity="0.8"/>
<path d="M546.0 767.0 L594.0 763.0" fill="none" stroke="#4a4a4a" stroke-width="0.9" opacity="0.8"/>
<path d="M579.0 763.0 L563.6 780.3 L565.8 797.8" fill="none" stroke="#4a4a4a" stroke-width="0.9" opacity="0.8"/>
<path d="M541.0 800.0 L565.8 797.8 L592.0 813.0 L612.0 817.0" fill="none" stroke="#4a4a4a" stroke-width="0.9" opacity="0.8"/>
<path d="M594.0 745.4 L598.0 766.0 L611.6 802.0" fill="none" stroke="#4a4a4a" stroke-width="0.9" opacity="0.8"/>
<path d="M559.0 733.0 L594.0 745.4" fill="none" stroke="#4a4a4a" stroke-width="0.9" opacity="0.8"/>
<path d="M651.0 763.0 L672.7 754.0 L690.0 776.0" fill="none" stroke="#4a4a4a" stroke-width="0.9" opacity="0.8"/>
<path d="M690.0 776.0 L692.3 815.0 L701.0 832.7 L699.0 841.0" fill="none" stroke="#4a4a4a" stroke-width="0.9" opacity="0.8"/>
<path d="M692.3 815.0 L716.0 806.0 L738.0 782.5 L749.0 773.0" fill="none" stroke="#4a4a4a" stroke-width="0.9" opacity="0.8"/>
<path d="M749.0 800.0 L733.8 821.8 L738.0 850.0" fill="none" stroke="#4a4a4a" stroke-width="0.9" opacity="0.8"/>
<path d="M642.0 725.8 L662.0 732.0 L690.0 752.0 L712.0 763.0" fill="none" stroke="#4a4a4a" stroke-width="0.9" opacity="0.8"/>
<path d="M630.0 872.0 L660.0 862.0 L660.0 915.0" fill="none" stroke="#4a4a4a" stroke-width="0.9" opacity="0.8"/>
<path d="M781.0 791.0 L807.0 813.0 L833.4 828.0 L859.6 826.0 L894.5 824.0 L903.0 839.0" fill="none" stroke="#4a4a4a" stroke-width="0.9" opacity="0.8"/>
<path d="M903.0 839.0 L903.0 865.0 L929.4 861.0 L947.0 856.6" fill="none" stroke="#4a4a4a" stroke-width="0.9" opacity="0.8"/>
</svg>
<div class="lbl" style="left:20px;top:482px">Greenland</div>
<div class="lbl" style="left:177px;top:494px">Iceland</div>
<div class="lbl" style="left:378px;top:501px">Sweden</div>
<div class="lbl" style="left:433px;top:532px">Finland</div>
<div class="lbl" style="left:817px;top:530px">Russia</div>
<div class="lbl" style="left:335px;top:543px">Norway</div>
<div class="lbl" style="left:280px;top:604px">United</div>
<div class="lbl" style="left:280px;top:616px">Kingdom</div>
<div class="lbl" style="left:340px;top:599px">Denmark</div>
<div class="lbl" style="left:228px;top:627px">Ireland</div>
<div class="lbl" style="left:390px;top:629px">Poland</div>
<div class="lbl" style="left:442px;top:619px">Belarus</div>
<div class="lbl" style="left:336px;top:641px">Germany</div>
<div class="lbl" style="left:462px;top:658px">Ukraine</div>
<div class="lbl" style="left:665px;top:671px">Kazakhstan</div>
<div class="lbl" style="left:869px;top:683px">Mongolia</div>
<div class="lbl" style="left:297px;top:684px">France</div>
<div class="lbl" style="left:360px;top:671px">Austria</div>
<div class="lbl" style="left:425px;top:691px">Romania</div>
<div class="lbl" style="left:353px;top:711px">Italy</div>
<div class="lbl" style="left:266px;top:727px">Spain</div>
<div class="lbl" style="left:411px;top:740px">Greece</div>
<div class="lbl" style="left:480px;top:744px">Türkiye</div>
<div class="lbl" style="left:678px;top:725px">Kyrgyzstan</div>
<div class="lbl" style="left:618px;top:744px">Turkmenistan</div>
<div class="lbl" style="left:872px;top:765px">China</div>
<div class="lbl" style="left:1005px;top:765px">South Korea</div>
<div class="lbl" style="left:1076px;top:760px">Japan</div>
<div class="lbl" style="left:234px;top:750px">Portugal</div>
<div class="lbl" style="left:337px;top:778px">Tunisia</div>
<div class="lbl" style="left:503px;top:770px">Syria</div>
<div class="lbl" style="left:528px;top:786px">Iraq</div>
<div class="lbl" style="left:592px;top:792px">Iran</div>
<div class="lbl" style="left:652px;top:780px">Afghanistan</div>
<div class="lbl" style="left:678px;top:806px">Pakistan</div>
<div class="lbl" style="left:760px;top:817px">Nepal</div>
<div class="lbl" style="left:247px;top:793px">Morocco</div>
<div class="lbl" style="left:298px;top:819px">Algeria</div>
<div class="lbl" style="left:383px;top:825px">Libya</div>
<div class="lbl" style="left:451px;top:825px">Egypt</div>
<div class="lbl" style="left:540px;top:847px">Saudi Arabia</div>
<div class="lbl" style="left:735px;top:851px">India</div>
<div class="lbl" style="left:602px;top:865px">Oman</div>
<div class="lbl" style="left:208px;top:839px">Western</div>
<div class="lbl" style="left:208px;top:851px">Sahara</div>
<div class="lbl" style="left:219px;top:876px">Mauritania</div>
<div class="lbl" style="left:273px;top:882px">Mali</div>
<div class="lbl" style="left:337px;top:884px">Niger</div>
<div class="lbl" style="left:457px;top:891px">Sudan</div>
<div class="lbl" style="left:390px;top:899px">Chad</div>
<div class="lbl" style="left:554px;top:893px">Yemen</div>
<div class="lbl" style="left:831px;top:855px">Myanmar</div>
<div class="lbl" style="left:831px;top:867px">(Burma)</div>
<div class="lbl" style="left:857px;top:890px">Thailand</div>
<div class="stl" style="left:741px;top:805px">PB</div>
<div class="stl" style="left:762px;top:807px">UK</div>
<div class="stl" style="left:766px;top:820px">UP</div>
<div class="stl" style="left:732.5px;top:828px">RJ</div>
<div class="stl" style="left:716px;top:849.5px">GJ</div>
<div class="stl" style="left:743.4px;top:872.4px">MH</div>
<div class="stl" style="left:764px;top:883px">TS</div>
<div class="stl" style="left:743.4px;top:901px">KA</div>
<div class="stl" style="left:762px;top:899.7px">AP</div>
<div class="stl" style="left:803.4px;top:835.3px">BR</div>
<div class="stl" style="left:810px;top:850.6px">WB</div>
<div class="stl" style="left:792.5px;top:867px">OD</div>
<div class="stl" style="left:830.7px;top:835.3px">ML</div>
<div class="stl" style="left:851.4px;top:833px">NL</div>
<div class="stl" style="left:853.6px;top:816.8px">AR</div>
<div class="stl" style="left:747.8px;top:794px">HP</div>
<div class="slbl" style="left:300px;top:439px">Norwegian Sea</div>
<div class="slbl" style="left:493px;top:325px">Barents Sea</div>
<div class="slbl" style="left:698px;top:323px">Kara Sea</div>
<div class="slbl" style="left:1177px;top:345px">East</div>
<div class="slbl" style="left:1177px;top:356px">Siberian Sea</div>
<div class="slbl" style="left:-3px;top:586px">Labrador Sea</div>
<div class="slbl" style="left:51px;top:763px">North</div>
<div class="slbl" style="left:51px;top:775px">Atlantic</div>
<div class="slbl" style="left:51px;top:788px">Ocean</div>
<div class="slbl" style="left:1140px;top:625px">Sea of</div>
<div class="slbl" style="left:1140px;top:636px">Okhotsk</div>
<div class="slbl" style="left:1047px;top:733px">Sea of Japan</div>
<div class="slbl" style="left:1047px;top:745px">(East Sea)</div>
<div class="slbl" style="left:998px;top:804px">East China Sea</div>
<div class="slbl" style="left:1037px;top:873px">Philippine Sea</div>
<div class="slbl" style="left:933px;top:890px">South</div>
<div class="slbl" style="left:933px;top:902px">China Sea</div>
<div class="slbl" style="left:788px;top:906px">Bay of Bengal</div>
</div></div>
<div class="abs" style="left:17px;top:318px;width:320px;height:49px;background:#fff;border-radius:4px;box-shadow:0 1px 4px rgba(0,0,0,0.3)"></div>
<svg class="abs" style="left:33px;top:331px" width="20" height="22" viewBox="0 0 20 22"><path d="M11.5 1A6.5 6.5 0 0 1 18 7.5C18 12 11.5 20.5 11.5 20.5S5 12 5 7.5A6.5 6.5 0 0 1 11.5 1Z" fill="#3c3c3c"/><circle cx="11.5" cy="7.5" r="2.3" fill="#fff"/><path d="M6 2.5Q1.5 5 1.8 9Q2.5 13 7.5 20" fill="none" stroke="#3c3c3c" stroke-width="1.5"/></svg>
<div class="abs" style="left:63px;top:334px;font-size:14.5px;color:#333;white-space:nowrap">Map Markers (15)</div>
<svg class="abs" style="left:303px;top:339px" width="9" height="6" viewBox="0 0 9 6"><path d="M1 1L4.5 4.5L8 1" fill="none" stroke="#ff4b00" stroke-width="1.5"/></svg>
<div class="abs" style="left:1136px;top:312px;width:81px;height:44px;background:#fff;border-radius:2px;box-shadow:0 1px 4px rgba(0,0,0,0.3)"></div>
<div class="abs" style="left:1156px;top:324px;font-size:18px;color:#000;white-space:nowrap">Map</div>
<svg class="abs" style="left:1200px;top:331px" width="10" height="5" viewBox="0 0 10 5"><path d="M0 0H10L5 5Z" fill="#666"/></svg>
<div class="abs" style="left:1216px;top:376px;width:40px;height:40px;background:#fff;border-radius:2px;box-shadow:0 1px 4px rgba(0,0,0,0.3)"></div>
<svg class="abs" style="left:1226px;top:386px" width="20" height="20" viewBox="0 0 20 20"><path d="M1.5 6.5V1.5H6.5M13.5 1.5H18.5V6.5M18.5 13.5V18.5H13.5M6.5 18.5H1.5V13.5" fill="none" stroke="#666" stroke-width="2.2"/></svg>
<div class="abs" style="left:1216px;top:886px;width:40px;height:40px;background:#fff;border-radius:50%;box-shadow:0 1px 4px rgba(0,0,0,0.3)"></div>
<svg class="abs" style="left:1223px;top:893px" width="26" height="21" viewBox="0 0 26 21"><path d="M9.5 6L13 2.5L16.5 6M6 9L2.5 12.5L6 16M20 9L23.5 12.5L20 16" fill="none" stroke="#666" stroke-width="2.2"/></svg>
<div class="abs" style="left:17px;top:889px;font-size:13px;color:#2e6b78;white-space:nowrap">© 2025 Monitouring</div>
<svg class="abs" style="left:436px;top:382px" width="30" height="45" viewBox="0 0 30 45"><path d="M15 44.6L2.3 22.6A14.9 14.9 0 1 1 27.7 22.6Z" fill="#ffb300"/><circle cx="15" cy="14.9" r="13.3" fill="#fff"/><g stroke="#3d8ef0" stroke-width="1.5" stroke-linecap="round"><path d="M15 2.8v10.4M10.5 5.4l9 5.2M10.5 10.6l9-5.2"/><path d="M13.4 3.6L15 5L16.6 3.6M13.4 12.4L15 11L16.6 12.4" fill="none" stroke-width="1"/></g><text x="15" y="21.5" text-anchor="middle" font-family="Liberation Sans" font-size="9.8" fill="#222" stroke="#222" stroke-width="0.25">0°</text><text x="15" y="37.5" text-anchor="middle" font-family="Liberation Sans" font-size="9.5" font-weight="bold" fill="#fff">5</text></svg>
<svg class="abs" style="left:399px;top:679px" width="30" height="45" viewBox="0 0 30 45"><path d="M15 44.6L2.3 22.6A14.9 14.9 0 1 1 27.7 22.6Z" fill="#f44336"/><circle cx="15" cy="14.9" r="13.3" fill="#fff"/><ellipse cx="12.5" cy="8.3" rx="5" ry="3.8" fill="#d8d8ea"/><ellipse cx="18" cy="7.6" rx="4.8" ry="4.4" fill="#e4e4f0"/><text x="15" y="21.5" text-anchor="middle" font-family="Liberation Sans" font-size="9.8" fill="#222" stroke="#222" stroke-width="0.25">20°</text><text x="15" y="37.5" text-anchor="middle" font-family="Liberation Sans" font-size="9.5" font-weight="bold" fill="#fff">1</text></svg>
<svg class="abs" style="left:503px;top:716px" width="30" height="50" viewBox="0 0 30 50"><path d="M15 50C11 44.5 0.2 35 0.2 25V15A14.8 14.8 0 0 1 29.8 15V25C29.8 35 19 44.5 15 50Z" fill="#2196f3"/><circle cx="15" cy="14.9" r="13.3" fill="#fff"/><circle cx="12" cy="5.5" r="3.2" fill="#f4a62a"/><ellipse cx="12.5" cy="9" rx="5" ry="3.6" fill="#dcdce8"/><ellipse cx="18" cy="8.3" rx="4.8" ry="4.3" fill="#e6e6f0"/><path d="M11.2 12.5l-1 2.2M14 12.5l-1 2.2M16.8 12.5l-1 2.2" stroke="#3b4fe0" stroke-width="1.2"/><text x="15" y="23" text-anchor="middle" font-family="Liberation Sans" font-size="9.8" fill="#222" stroke="#222" stroke-width="0.25">14°</text><text x="15" y="37.3" text-anchor="middle" font-family="Liberation Sans" font-size="9.5" font-weight="bold" fill="#fff">10</text></svg>
<svg class="abs" style="left:769px;top:754px" width="30" height="50" viewBox="0 0 30 50"><path d="M15 50C11 44.5 0.2 35 0.2 25V15A14.8 14.8 0 0 1 29.8 15V25C29.8 35 19 44.5 15 50Z" fill="#2196f3"/><circle cx="15" cy="14.9" r="13.3" fill="#fff"/><ellipse cx="12.5" cy="8.3" rx="5" ry="3.8" fill="#d8d8ea"/><ellipse cx="18" cy="7.6" rx="4.8" ry="4.4" fill="#e4e4f0"/><text x="15" y="21.5" text-anchor="middle" font-family="Liberation Sans" font-size="9.8" fill="#222" stroke="#222" stroke-width="0.25">24°</text><text x="15" y="37.3" text-anchor="middle" font-family="Liberation Sans" font-size="9.5" font-weight="bold" fill="#fff">10</text></svg>
<svg class="abs" style="left:838px;top:770px" width="30" height="50" viewBox="0 0 30 50"><path d="M15 50C11 44.5 0.2 35 0.2 25V15A14.8 14.8 0 0 1 29.8 15V25C29.8 35 19 44.5 15 50Z" fill="#2196f3"/><circle cx="15" cy="14.9" r="13.3" fill="#fff"/><g stroke="#3d8ef0" stroke-width="1.5" stroke-linecap="round"><path d="M15 2.8v10.4M10.5 5.4l9 5.2M10.5 10.6l9-5.2"/><path d="M13.4 3.6L15 5L16.6 3.6M13.4 12.4L15 11L16.6 12.4" fill="none" stroke-width="1"/></g><text x="15" y="21.5" text-anchor="middle" font-family="Liberation Sans" font-size="9.8" fill="#222" stroke="#222" stroke-width="0.25">6°</text><text x="15" y="37.3" text-anchor="middle" font-family="Liberation Sans" font-size="9.5" font-weight="bold" fill="#fff">7</text></svg>
<div class="abs" style="left:1275px;top:310px;width:614px;height:605px;background:#fff;border:1px solid #e6e6e6;border-radius:5px 5px 0 0"></div>
<div class="abs" style="left:1291px;top:327px;font-size:20.6px;color:#2b2b2b;white-space:nowrap;letter-spacing:-0.2px">Tours on Wed, Apr 1, 2026</div>
<svg class="abs" style="left:1846px;top:333px" width="14" height="14" viewBox="0 0 14 14"><path d="M1.5 1.5L12.5 12.5M12.5 1.5L1.5 12.5" stroke="#ff4b00" stroke-width="1.8"/></svg>
<div class="abs" style="left:1276px;top:367px;width:612px;height:1px;background:#ececec"></div>
<div class="abs" style="left:1874px;top:368px;width:14px;height:546px;background:#fcfcfc;border-left:1px solid #f0f0f0"></div>
<svg class="abs" style="left:1877px;top:373px" width="9" height="7" viewBox="0 0 9 7"><path d="M0.5 6.5L4.5 0.8L8.5 6.5Z" fill="#8a8a8a"/></svg>
<div class="abs" style="left:1877px;top:386px;width:9px;height:159px;background:#8f8f8f;border-radius:5px"></div>
<div class="abs" style="left:1291px;top:384px;width:567px;height:322px;border:1px solid #ececec;border-radius:5px;background:#fff"></div>
<div class="abs" style="left:1308px;top:401px;font-size:16.6px;color:#1976d2;white-space:nowrap;-webkit-text-stroke:0.25px #1976d2">Nordic Adventures</div>
<div class="abs" style="left:1761px;top:398px;width:80px;height:26px;background:#4caf50;border-radius:3px;color:#fff;font-weight:bold;font-size:12.5px;letter-spacing:-0.3px;line-height:26px;text-align:center">Confirmed</div>
<div class="abs" style="left:1309px;top:430px;line-height:0"><svg width="14" height="15" viewBox="0 0 14 15"><path d="M3.5 0.8v2.4M10.5 0.8v2.4" stroke="#9e9e9e" stroke-width="1.5"/><rect x="1" y="2.2" width="12" height="12" rx="1" fill="none" stroke="#9e9e9e" stroke-width="1.5"/><path d="M1 5.2h12" stroke="#9e9e9e" stroke-width="1.6"/><path d="M4 8.5h1M6.5 8.5h1M9 8.5h1" stroke="#9e9e9e" stroke-width="0.9"/></svg></div>
<div class="abs" style="left:1329px;top:430px;font-size:14.3px;color:#9e9e9e;white-space:nowrap">Sat, Mar 28, 2026 - Thu, Apr 9, 2026 ( days)</div>
<div class="abs" style="left:1620px;top:431px;line-height:0"><svg width="12" height="14" viewBox="0 0 12 14"><path d="M6 13.2C2.8 9.3 1.2 6.9 1.2 5.2A4.8 4.8 0 0 1 10.8 5.2C10.8 6.9 9.2 9.3 6 13.2Z" fill="none" stroke="#9e9e9e" stroke-width="1.5"/><circle cx="6" cy="5.2" r="1.7" fill="#9e9e9e"/></svg></div>
<div class="abs" style="left:1639px;top:430px;font-size:14.3px;color:#9e9e9e;white-space:nowrap">NO</div>
<div class="abs" style="left:1292px;top:457px;width:565px;height:1px;background:#ededed"></div>
<div class="abs" style="left:1308px;top:472px;font-size:16.5px;color:#333;white-space:nowrap">Day 5: Daily Plan</div>
<div class="abs" style="left:1312px;top:502px;width:529px;height:28px;background:#f4f4f4;border-radius:5px"></div>
<div class="abs" style="left:1317px;top:510px;line-height:0"><svg width="13" height="11" viewBox="0 0 13 11"><path d="M1 0v3.5Q1 5 2.5 5.2V11h1.6V5.2Q5.5 5 5.5 3.5V0H4.6v3H3.8V0H2.9v3H2.1V0Z" fill="#5f5f5f"/><path d="M12 0Q9 0.5 9 3.5V5H7.2l0.8 6h3.2l0.8-6Z" fill="#5f5f5f"/></svg></div>
<div class="abs" style="left:1339px;top:508px;font-size:12.75px;color:#424242;white-space:nowrap">07:30(1h) - Breakfast at Clarion Hotel The Edge</div>
<div class="abs" style="left:1312px;top:534px;width:529px;height:28px;background:#f4f4f4;border-radius:5px"></div>
<div class="abs" style="left:1317px;top:541px;line-height:0"><svg width="13" height="14" viewBox="0 0 13 14"><path d="M3.3 0.6v2.6M9.7 0.6v2.6" stroke="#4caf50" stroke-width="1.5"/><rect x="1" y="2.4" width="11" height="10.8" rx="1.2" fill="none" stroke="#4caf50" stroke-width="1.6"/><path d="M1 5.4h11" stroke="#4caf50" stroke-width="1.4"/></svg></div>
<div class="abs" style="left:1339px;top:540px;font-size:12.75px;color:#424242;white-space:nowrap">08:30(2h) - Sommarøy islands visit</div>
<div class="abs" style="left:1312px;top:566px;width:529px;height:28px;background:#f4f4f4;border-radius:5px"></div>
<div class="abs" style="left:1317px;top:573px;line-height:0"><svg width="13" height="14" viewBox="0 0 13 14"><path d="M3.3 0.6v2.6M9.7 0.6v2.6" stroke="#ff9800" stroke-width="1.5"/><rect x="1" y="2.4" width="11" height="10.8" rx="1.2" fill="none" stroke="#ff9800" stroke-width="1.6"/><path d="M1 5.4h11" stroke="#ff9800" stroke-width="1.4"/></svg></div>
<div class="abs" style="left:1339px;top:572px;font-size:12.75px;color:#424242;white-space:nowrap">10:30(30m) - Back to hotel at Clarion Hotel The Edge</div>
<div class="abs" style="left:1308px;top:598px;width:533px;height:47px;background:#ebebeb;border-radius:5px"></div>
<svg class="abs" style="left:1320px;top:615px" width="18" height="12" viewBox="0 0 18 12"><path d="M0 0h1.8v7.5h7V2h6.2Q18 2 18 5v7h-1.8V9.6H1.8V12H0Z" fill="#5c6bc0"/><circle cx="4.6" cy="4.2" r="2" fill="#5c6bc0"/></svg>
<div class="abs" style="left:1346px;top:613px;font-size:14.5px;font-weight:bold;color:#222;white-space:nowrap">Clarion Hotel® The Edge</div>
<svg class="abs" style="left:1807px;top:615px" width="12" height="12" viewBox="0 0 12 12"><circle cx="6" cy="2.6" r="2.4" fill="#ff4b00"/><path d="M1.5 12V7.5Q1.5 5.8 3.3 5.8H8.7Q10.5 5.8 10.5 7.5V12H7.2V8.5H4.8V12Z" fill="#ff4b00"/><path d="M6 6.2v2" stroke="#fff" stroke-width="0.8"/></svg>
<svg class="abs" style="left:1728px;top:670px" width="13" height="12" viewBox="0 0 13 12"><path d="M1 11.2L1.4 8.6L8.6 1.4Q9.3 0.7 10 1.4L11.2 2.6Q11.9 3.3 11.2 4L4 11.2Z" fill="#ff4b00"/></svg>
<div class="abs" style="left:1749px;top:668px;font-size:14.5px;letter-spacing:-0.9px;font-weight:bold;color:#ff4b00;white-space:nowrap">View/Edit Tour</div>
<div class="abs" style="left:1291px;top:720px;width:567px;height:300px;border:1px solid #ececec;border-radius:5px;background:#fff"></div>
<div class="abs" style="left:1308px;top:737px;font-size:16.6px;color:#1976d2;white-space:nowrap;-webkit-text-stroke:0.25px #1976d2">Between Europe &amp; Asia</div>
<div class="abs" style="left:1759px;top:734px;width:82px;height:26px;background:#3f51b5;border-radius:3px;color:#fff;font-weight:bold;font-size:12.5px;letter-spacing:-0.3px;line-height:26px;text-align:center">In Progress</div>
<div class="abs" style="left:1309px;top:766px;line-height:0"><svg width="14" height="15" viewBox="0 0 14 15"><path d="M3.5 0.8v2.4M10.5 0.8v2.4" stroke="#9e9e9e" stroke-width="1.5"/><rect x="1" y="2.2" width="12" height="12" rx="1" fill="none" stroke="#9e9e9e" stroke-width="1.5"/><path d="M1 5.2h12" stroke="#9e9e9e" stroke-width="1.6"/><path d="M4 8.5h1M6.5 8.5h1M9 8.5h1" stroke="#9e9e9e" stroke-width="0.9"/></svg></div>
<div class="abs" style="left:1329px;top:766px;font-size:14.3px;color:#9e9e9e;white-space:nowrap">Mon, Mar 23, 2026 - Sat, Apr 11, 2026 ( days)</div>
<div class="abs" style="left:1633px;top:767px;line-height:0"><svg width="12" height="14" viewBox="0 0 12 14"><path d="M6 13.2C2.8 9.3 1.2 6.9 1.2 5.2A4.8 4.8 0 0 1 10.8 5.2C10.8 6.9 9.2 9.3 6 13.2Z" fill="none" stroke="#9e9e9e" stroke-width="1.5"/><circle cx="6" cy="5.2" r="1.7" fill="#9e9e9e"/></svg></div>
<div class="abs" style="left:1652px;top:766px;font-size:14.3px;color:#9e9e9e;white-space:nowrap">TR</div>
<div class="abs" style="left:1292px;top:793px;width:565px;height:1px;background:#ededed"></div>
<div class="abs" style="left:1308px;top:808px;font-size:16.5px;color:#333;white-space:nowrap">Day 10: Daily Plan</div>
<div class="abs" style="left:1312px;top:838px;width:529px;height:28px;background:#f4f4f4;border-radius:5px"></div>
<div class="abs" style="left:1317px;top:846px;line-height:0"><svg width="13" height="11" viewBox="0 0 13 11"><path d="M1 0v3.5Q1 5 2.5 5.2V11h1.6V5.2Q5.5 5 5.5 3.5V0H4.6v3H3.8V0H2.9v3H2.1V0Z" fill="#5f5f5f"/><path d="M12 0Q9 0.5 9 3.5V5H7.2l0.8 6h3.2l0.8-6Z" fill="#5f5f5f"/></svg></div>
<div class="abs" style="left:1339px;top:844px;font-size:12.75px;color:#424242;white-space:nowrap">07:30(1h) - Breakfast at Akra Hotel Antalya</div>
<div class="abs" style="left:1312px;top:870px;width:529px;height:28px;background:#f4f4f4;border-radius:5px"></div>
<div class="abs" style="left:1317px;top:877px;line-height:0"><svg width="13" height="14" viewBox="0 0 13 14"><path d="M3.3 0.6v2.6M9.7 0.6v2.6" stroke="#4caf50" stroke-width="1.5"/><rect x="1" y="2.4" width="11" height="10.8" rx="1.2" fill="none" stroke="#4caf50" stroke-width="1.6"/><path d="M1 5.4h11" stroke="#4caf50" stroke-width="1.4"/></svg></div>
<div class="abs" style="left:1339px;top:876px;font-size:12.75px;color:#424242;white-space:nowrap">08:30(2h) - Visit Perge</div>
<div class="abs" style="left:1312px;top:902px;width:529px;height:28px;background:#f4f4f4;border-radius:5px"></div>
<div class="abs" style="left:1317px;top:909px;line-height:0"><svg width="13" height="14" viewBox="0 0 13 14"><path d="M3.3 0.6v2.6M9.7 0.6v2.6" stroke="#4caf50" stroke-width="1.5"/><rect x="1" y="2.4" width="11" height="10.8" rx="1.2" fill="none" stroke="#4caf50" stroke-width="1.6"/><path d="M1 5.4h11" stroke="#4caf50" stroke-width="1.4"/></svg></div>
<div class="abs" style="left:1339px;top:908px;font-size:12.75px;color:#424242;white-space:nowrap">10:30(2h) - Visit Aspendos</div>
<div class="abs" style="left:1266px;top:914px;width:650px;height:3px;background:#fff"></div>
<div class="abs" style="left:1898px;top:0;width:15px;height:914px;background:#fafafa"></div>
<svg class="abs" style="left:1901px;top:5px" width="9" height="7" viewBox="0 0 9 7"><path d="M0.5 6.5L4.5 0.8L8.5 6.5Z" fill="#8a8a8a"/></svg>
<svg class="abs" style="left:1901px;top:901px" width="9" height="7" viewBox="0 0 9 7"><path d="M0.5 0.5L4.5 6.2L8.5 0.5Z" fill="#8a8a8a"/></svg>
<div id="tb"></div>
<div class="abs" style="left:1845px;top:52px;width:1px;height:249px;background:#e0e0e0"></div>
<div class="abs" style="left:1850px;top:61px;width:31px;height:36px;border-radius:5px;background:#fff;overflow:hidden"><div style="height:19px;background:#ff5e1e"></div></div>
<svg class="abs" style="left:1858px;top:61px" width="16" height="17" viewBox="0 0 16 17"><path d="M4 1.2v2.5M12 1.2v2.5" stroke="#fff" stroke-width="1.6" stroke-linecap="round"/><rect x="1.8" y="2.8" width="12.4" height="13" rx="1.6" fill="none" stroke="#fff" stroke-width="1.7"/><rect x="4" y="7" width="8" height="1.8" fill="#fff"/></svg>
<svg class="abs" style="left:1858px;top:80px" width="16" height="17" viewBox="0 0 16 17"><path d="M4 1.2v2.5M12 1.2v2.5" stroke="#222" stroke-width="1.6" stroke-linecap="round"/><rect x="1.8" y="2.8" width="12.4" height="13" rx="1.6" fill="none" stroke="#222" stroke-width="1.7"/><rect x="1.8" y="2.8" width="12.4" height="3" fill="#222"/><g fill="#222"><circle cx="4.8" cy="9" r="0.8"/><circle cx="8" cy="9" r="0.8"/><circle cx="11.2" cy="9" r="0.8"/><circle cx="4.8" cy="12" r="0.8"/><circle cx="8" cy="12" r="0.8"/><circle cx="11.2" cy="12" r="0.8"/></g></svg>
<svg class="abs" style="left:1858px;top:125px" width="15" height="16" viewBox="0 0 15 16"><path d="M1.5 1.5h12M1.5 14.5h12" stroke="#ff4b00" stroke-width="1.5"/><path d="M7.5 4v8" stroke="#ff4b00" stroke-width="1.5"/><path d="M4.5 5.8L7.5 3.2L10.5 5.8ZM4.5 10.2L7.5 12.8L10.5 10.2Z" fill="#ff4b00" stroke="#ff4b00" stroke-width="1"/></svg>
<svg class="abs" style="left:1858px;top:172px" width="16" height="17" viewBox="0 0 16 17"><path d="M4 1v3M12 1v3" stroke="#ff4b00" stroke-width="1.6"/><rect x="1.6" y="2.6" width="12.8" height="13.4" rx="1" fill="none" stroke="#ff4b00" stroke-width="1.5"/><rect x="1.6" y="2.6" width="12.8" height="3" fill="#ff4b00"/><rect x="4" y="8" width="3.5" height="3.5" fill="#ff4b00"/></svg>
<svg class="abs" style="left:1858px;top:221px" width="15" height="16" viewBox="0 0 15 16"><path d="M12.3 9.5A5 5 0 1 1 10.8 4.4" fill="none" stroke="#ff4b00" stroke-width="1.7"/><path d="M8.2 1.6 L13.4 1.6 L13.4 6.8Z" fill="#ff4b00"/></svg>
<svg class="abs" style="left:1858px;top:269px" width="15" height="16" viewBox="0 0 15 16"><path d="M1.8 1.5h11.4L8.9 7.8v6.6L6.1 12.4V7.8Z" fill="none" stroke="#ff4b00" stroke-width="1.6" stroke-linejoin="round"/></svg>
</div><div id="bd"></div></body></html>
